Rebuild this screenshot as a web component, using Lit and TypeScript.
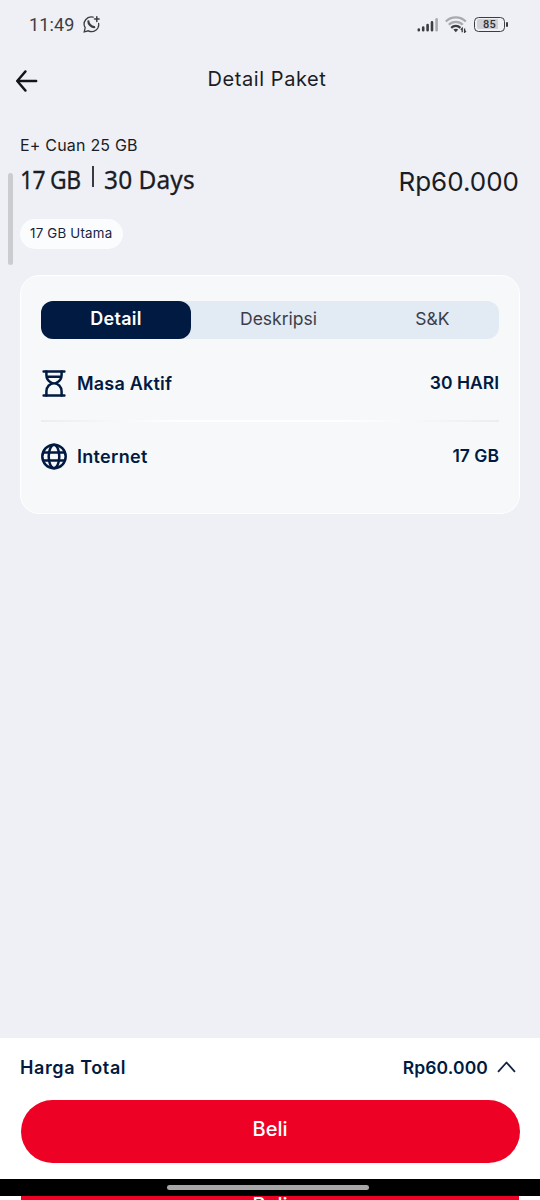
import { LitElement, html, css, svg } from "lit";
import { customElement, state } from "lit/decorators.js";
import { classMap } from "lit/directives/class-map.js";

const hourglass = svg`<path d="M2.6 1.4H23.4M2.6 25.4H23.4" /><path d="M5.4 1.6V5C5.4 9 7.6 11.4 10.6 12.9M20.6 1.6V5C20.6 9 18.4 11.4 15.4 12.9M5.4 25.4V21.4C5.4 16.6 8.8 13.3 13 13.3S20.6 16.6 20.6 21.4V25.4M6.4 6.8H19.6" />`;
const globe = svg`<circle cx="13" cy="13.5" r="11.7" /><ellipse cx="13" cy="13.5" rx="5.3" ry="11.7" /><path d="M2 9.4H24M2 17.6H24" />`;

@customElement("status-bar")
export class StatusBar extends LitElement {
  static styles = css`
    :host { display: flex; align-items: center; height: 48px; padding: 0 32px 0 29px; box-sizing: border-box; color: #3c3d43; }
    .time { font: 400 18px/24px Roboto, sans-serif; letter-spacing: 0.15px; padding-top: 2px; }
    .chat { margin-left: 8px; }
    .right { margin-left: auto; display: flex; align-items: center; }
    .wifi { margin: 0 7px 0 6px; }
    svg { display: block; }
    .battery { display: flex; align-items: center; gap: 1px; }
    .shell { box-sizing: border-box; width: 31px; height: 15px; border: 1.6px solid #3c3d43; border-radius: 4.5px; padding: 1.5px; display: flex; }
    .level { flex: 1; border-radius: 2px; background: linear-gradient(90deg, #cfd0d4 82%, transparent 82%); font: 500 11px/11.5px Roboto, sans-serif; text-align: center; color: #303137; letter-spacing: 0.2px; }
    .tip { width: 2px; height: 5px; border-radius: 1px; background: #3c3d43; }
  `;
  render() {
    return html`
      <span class="time">11:49</span>
      <svg class="chat" width="17" height="17" viewBox="0 0 17 17" fill="none" stroke="#3c3d43" stroke-width="1.3" stroke-linecap="round">
        <path d="M10.2 1.2A7.1 7.1 0 0 0 2.2 11.7L1.2 15.8L5.3 14.8A7.1 7.1 0 0 0 15.6 7.3" />
        <path d="M13.8 .8V5.4M11.5 3.1H16.1" stroke-width="1.5" />
        <path d="M5.4 5.4C5.2 7.6 8.4 11.2 11.2 11.2" stroke-width="2.2" />
      </svg>
      <div class="right">
        <svg width="22" height="15" viewBox="0 0 22 15" stroke-width="2.6" stroke-linecap="round" stroke="#3c3d43">
          <path d="M1.8 13.2V12.6M6.2 13.2V10.6M10.6 13.2V8M15 13.2V5.4" />
          <path d="M19.6 13.2V2.3" stroke="#a9aaaf" />
        </svg>
        <svg class="wifi" width="22" height="17" viewBox="0 0 22 17" fill="none" stroke-width="2.2">
          <path d="M.8 5.4C6.2-.1 15.4-.1 20.8 5.4" stroke="#a9aaaf" />
          <path d="M3.8 8.7C7.6 4.8 14 4.8 17.8 8.7" stroke="#a9aaaf" />
          <path d="M6.2 11.9C8.8 9.3 12.8 9.3 15.4 11.9" stroke="#3c3d43" />
          <path d="M8.3 13.6Q10.8 12 13.3 13.6L10.8 16.2Z" fill="#3c3d43" />
          <path d="M17.2 16.3V12.4L15.8 13.8M19.6 12.4V16.3L21 14.9" stroke="#3c3d43" stroke-width="1.3" />
        </svg>
        <div class="battery"><div class="shell"><div class="level">85</div></div><div class="tip"></div></div>
      </div>`;
  }
}

@customElement("app-root")
export class AppRoot extends LitElement {
  @state() private active = 0;

  static styles = css`
    :host { display: flex; flex-direction: column; position: relative; width: 540px; height: 1200px; overflow: hidden; background: #eff0f5; font-family: Inter, sans-serif; color: #1b1c24; }
    svg { display: block; }
    .header { display: grid; grid-template-columns: 60px 1fr 60px; height: 64px; align-items: center; }
    .back { margin: 1px 0 0 15px; }
    .title { text-align: center; font-size: 20px; line-height: 30px; margin-top: -3px; margin-right: 6px; letter-spacing: 0.58px; }
    .summary { padding: 21px 21px 0 20px; height: 162.5px; box-sizing: border-box; }
    .name { font-size: 16px; line-height: 24px; height: 24px; letter-spacing: 0.2px; }
    .line { display: flex; align-items: center; height: 45px; }
    .quota { display: flex; font: 400 26px/40px "Noto Sans", sans-serif; -webkit-text-stroke: 0.3px #1b1c24; margin-top: -2px; }
    .gb, .days { display: inline-block; white-space: nowrap; transform-origin: 0 50%; }
    .gb { width: 61px; transform: scaleX(0.88); letter-spacing: -0.6px; word-spacing: -0.5px; }
    .days { transform: scaleX(0.94); letter-spacing: 0.2px; word-spacing: -0.5px; }
    .rule { width: 1.5px; height: 21px; margin: 7px 10px 0 11px; background: #3a3b42; }
    .price { margin-left: auto; font-size: 26px; line-height: 40px; padding-top: 5px; }
    .pill { display: inline-flex; align-items: center; box-sizing: border-box; height: 30px; width: 102.5px; margin-top: 16.5px; padding: 0 0 2px 10px; border-radius: 15px; background: #fbfcfd; color: #16233f; font-size: 13.3px; letter-spacing: 0.22px; white-space: nowrap; }
    .scroll { position: absolute; left: 8px; top: 173px; width: 4.5px; height: 92px; border-radius: 2.5px; background: #cbccd0; }
    .card { box-sizing: border-box; margin: 0 20px; height: 239.5px; border: 1.5px solid #fff; border-radius: 19px; background: #f7f8fa; padding: 25.5px 20px 0 20px; color: #001a41; }
    .tabs { display: flex; height: 38px; border-radius: 12px; background: #e2eaf3; }
    .tab { width: 150px; font-size: 17.5px; line-height: 35px; text-align: center; color: #3b3d4a; }
    .tab.mid { width: 175px; }
    .tab.last { width: 133px; }
    .tab.on { background: #001a41; color: #fff; font-weight: 600; border-radius: 12px; font-size: 18px; letter-spacing: 0.3px; }
    .row { display: flex; align-items: center; height: 69px; font-weight: 600; font-size: 17.5px; }
    .row svg { margin-right: 10px; }
    .value { margin-left: auto; padding-bottom: 2px; }
    .first { height: 81px; padding-top: 7px; box-sizing: border-box; }
    .k1 { font-size: 18px; letter-spacing: 0.2px; }
    .k2 { font-size: 18px; letter-spacing: 0.3px; }
    .divider { height: 1.5px; background: linear-gradient(90deg, #ecedf0, #f7f8fa 18%, #fff 30%, #fff 65%, #f7f8fa 80%, #ecedf0); }
    .footer { margin-top: auto; height: 141px; background: #fff; color: #001a41; }
    .total { display: flex; align-items: center; height: 62px; padding: 0 24px 4px 20px; box-sizing: border-box; font-size: 17.5px; font-weight: 600; }
    .label { font-size: 18px; letter-spacing: 0.6px; }
    .sum { margin-left: auto; letter-spacing: 0.12px; }
    .chev { margin-left: 9px; }
    .buy { display: block; width: 499px; height: 62.5px; margin: 0 0 0 20.5px; padding: 0 0 5px; border: 0; border-radius: 32px; background: #ed0226; color: #fff; font: 500 20px/50px Inter, sans-serif; }
    .nav { height: 17px; background: #000; display: flex; justify-content: center; align-items: center; }
    .handle { width: 202px; height: 5px; border-radius: 3px; background: #a6a6a6; margin-right: 4px; }
    .peek { height: 4px; background: #fff; overflow: hidden; }
    .peekin { width: 498px; height: 30px; margin: 0 auto; background: #ed0226; color: #fff; font-size: 20px; font-weight: 500; line-height: 18px; text-align: center; }
  `;

  render() {
    const tabs = ["Detail", "Deskripsi", "S&K"];
    return html`
      <status-bar></status-bar>
      <div class="header">
        <svg class="back" width="24" height="24" viewBox="0 0 24 24" fill="none" stroke="#14151b" stroke-width="2.4" stroke-linecap="round" stroke-linejoin="round"><path d="M21.2 12H2.2M10.5 2.4L2.2 12L10.5 21.6" /></svg>
        <div class="title">Detail Paket</div>
      </div>
      <div class="summary">
        <div class="name">E+ Cuan 25 GB</div>
        <div class="line">
          <div class="quota"><span class="gb">17 GB</span><div class="rule"></div><span class="days">30 Days</span></div>
          <div class="price">Rp60.000</div>
        </div>
        <div class="pill">17 GB Utama</div>
      </div>
      <div class="scroll"></div>
      <div class="card">
        <div class="tabs">
          ${tabs.map((t, i) => html`<div class=${classMap({ tab: true, mid: i === 1, last: i === 2, on: i === this.active })} @click=${() => (this.active = i)}>${t}</div>`)}
        </div>
        <div class="row first">
          <svg width="26" height="27" viewBox="0 0 26 27" fill="none" stroke="#001a41" stroke-width="2.5" stroke-linecap="round">${hourglass}</svg>
          <span class="k1">Masa Aktif</span><span class="value">30 HARI</span>
        </div>
        <div class="divider"></div>
        <div class="row">
          <svg width="26" height="27" viewBox="0 0 26 27" fill="none" stroke="#001a41" stroke-width="2.5">${globe}</svg>
          <span class="k2">Internet</span><span class="value">17 GB</span>
        </div>
      </div>
      <div class="footer">
        <div class="total">
          <span class="label">Harga Total</span><span class="sum">Rp60.000</span>
          <svg class="chev" width="19" height="12" viewBox="0 0 19 12" fill="none" stroke="#14233f" stroke-width="1.8" stroke-linecap="round" stroke-linejoin="round"><path d="M1.5 10.3L9.5 1.5L17.5 10.3" /></svg>
        </div>
        <button class="buy">Beli</button>
      </div>
      <div class="nav"><div class="handle"></div></div>
      <div class="peek"><div class="peekin">Beli</div></div>`;
  }
}
